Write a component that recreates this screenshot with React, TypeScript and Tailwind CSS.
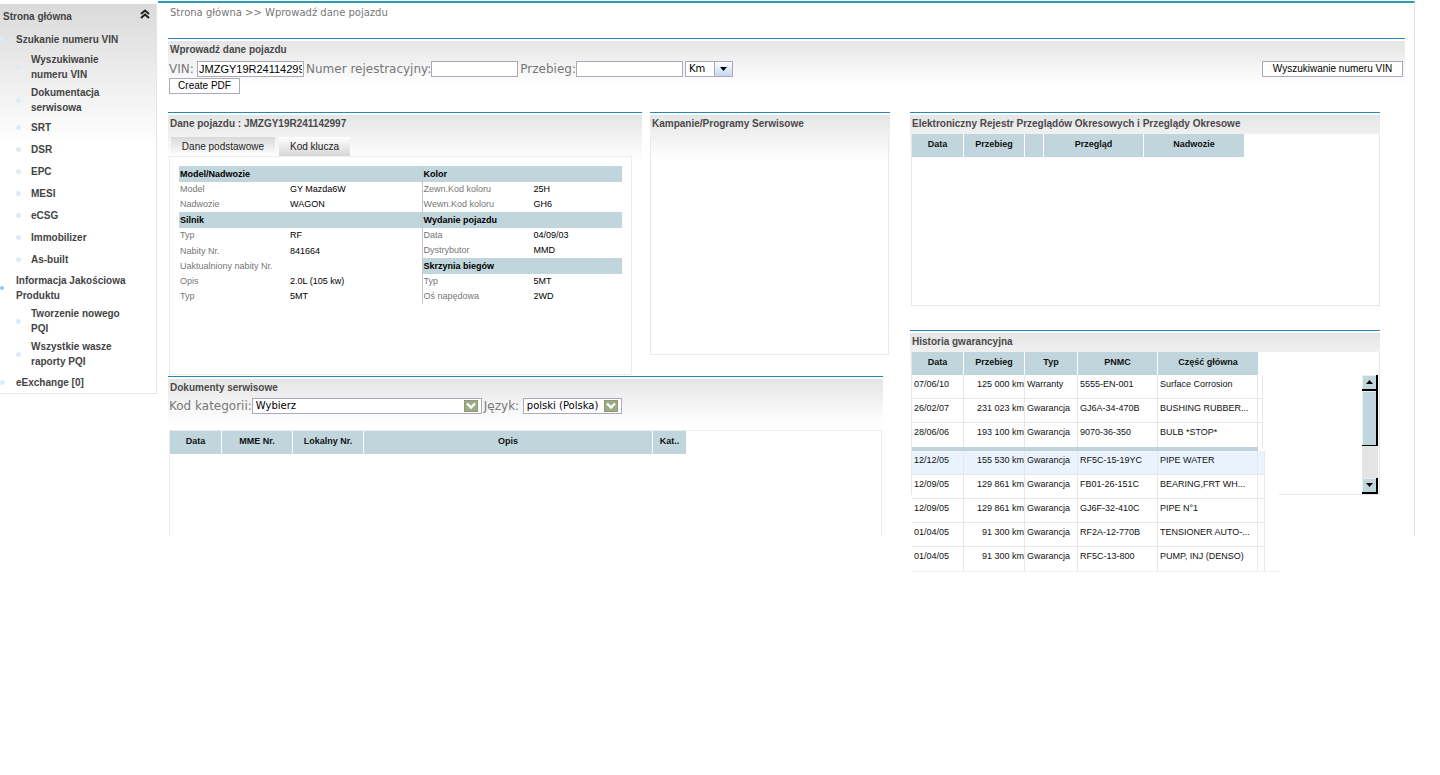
import React, { useState } from 'react';
import clsx from 'clsx';

interface MenuItem {
  label: string;
  children?: string[];
}

interface Column {
  label: string;
  width: string;
}

interface SpecRow {
  label: string;
  value?: string;
  header?: boolean;
}

interface Claim {
  date: string;
  mileage: string;
  type: string;
  pnmc: string;
  part: string;
}

const menu: MenuItem[] = [
  {
    label: 'Szukanie numeru VIN',
    children: [
      'Wyszukiwanie numeru VIN',
      'Dokumentacja serwisowa',
      'SRT',
      'DSR',
      'EPC',
      'MESI',
      'eCSG',
      'Immobilizer',
      'As-built',
    ],
  },
  {
    label: 'Informacja Jakościowa Produktu',
    children: ['Tworzenie nowego PQI', 'Wszystkie wasze raporty PQI'],
  },
  { label: 'eExchange [0]' },
];

const tabLabels = ['Dane podstawowe', 'Kod klucza'];

const specLeft: SpecRow[] = [
  { label: 'Model/Nadwozie', header: true },
  { label: 'Model', value: 'GY Mazda6W' },
  { label: 'Nadwozie', value: 'WAGON' },
  { label: 'Silnik', header: true },
  { label: 'Typ', value: 'RF' },
  { label: 'Nabity Nr.', value: '841664' },
  { label: 'Uaktualniony nabity Nr.', value: '' },
  { label: 'Opis', value: '2.0L (105 kw)' },
  { label: 'Typ', value: '5MT' },
];

const specRight: SpecRow[] = [
  { label: 'Kolor', header: true },
  { label: 'Zewn.Kod koloru', value: '25H' },
  { label: 'Wewn.Kod koloru', value: 'GH6' },
  { label: 'Wydanie pojazdu', header: true },
  { label: 'Data', value: '04/09/03' },
  { label: 'Dystrybutor', value: 'MMD' },
  { label: 'Skrzynia biegów', header: true },
  { label: 'Typ', value: '5MT' },
  { label: 'Oś napędowa', value: '2WD' },
];

const serviceColumns: Column[] = [
  { label: 'Data', width: 'w-[52px]' },
  { label: 'Przebieg', width: 'w-[61px]' },
  { label: '', width: 'w-[19px]' },
  { label: 'Przegląd', width: 'w-[100px]' },
  { label: 'Nadwozie', width: 'w-[100px]' },
];

const documentColumns: Column[] = [
  { label: 'Data', width: 'w-[52px]' },
  { label: 'MME Nr.', width: 'w-[71px]' },
  { label: 'Lokalny Nr.', width: 'w-[71px]' },
  { label: 'Opis', width: 'w-[289px]' },
  { label: 'Kat..', width: 'w-[33px]' },
];

const claimColumns: Column[] = [
  { label: 'Data', width: 'w-[52px]' },
  { label: 'Przebieg', width: 'w-[61px]' },
  { label: 'Typ', width: 'w-[53px]' },
  { label: 'PNMC', width: 'w-[80px]' },
  { label: 'Część główna', width: 'w-[100px]' },
];

const recentClaims: Claim[] = [
  { date: '07/06/10', mileage: '125 000 km', type: 'Warranty', pnmc: '5555-EN-001', part: 'Surface Corrosion' },
  { date: '26/02/07', mileage: '231 023 km', type: 'Gwarancja', pnmc: 'GJ6A-34-470B', part: 'BUSHING RUBBER...' },
  { date: '28/06/06', mileage: '193 100 km', type: 'Gwarancja', pnmc: '9070-36-350', part: 'BULB *STOP*' },
];

const olderClaims: Claim[] = [
  { date: '12/12/05', mileage: '155 530 km', type: 'Gwarancja', pnmc: 'RF5C-15-19YC', part: 'PIPE WATER' },
  { date: '12/09/05', mileage: '129 861 km', type: 'Gwarancja', pnmc: 'FB01-26-151C', part: 'BEARING,FRT WH...' },
  { date: '12/09/05', mileage: '129 861 km', type: 'Gwarancja', pnmc: 'GJ6F-32-410C', part: 'PIPE N°1' },
  { date: '01/04/05', mileage: '91 300 km', type: 'Gwarancja', pnmc: 'RF2A-12-770B', part: 'TENSIONER AUTO-...' },
  { date: '01/04/05', mileage: '91 300 km', type: 'Gwarancja', pnmc: 'RF5C-13-800', part: 'PUMP, INJ (DENSO)' },
];

const verdana = "font-['DejaVu_Sans',sans-serif]";
const inputClass = 'mr-0.5 h-4 border border-[#a9abbd] bg-white px-px text-[11px] text-black outline-none';
const buttonClass = 'h-4 border border-[#a9abbd] bg-white text-[10px] leading-[14px] text-black';
const selectClass = 'block h-4 appearance-none border border-[#a9abbd] bg-white pl-[3px] text-[10px] leading-[14px] text-black';

const Panel: React.FC<{ title: string; className?: string; children?: React.ReactNode }> = ({
  title,
  className,
  children,
}) => (
  <section className={clsx('border-t border-[#2b86b5] pt-0.5', className)}>
    <div className="bg-[linear-gradient(to_bottom,#e5e5e5,#ffffff_44px)]">
      <h2 className="h-[19px] pl-0.5 text-[10px] font-bold leading-[18px] text-[#4a4a4a]">{title}</h2>
      {children}
    </div>
  </section>
);

const HeadRow: React.FC<{ columns: Column[] }> = ({ columns }) => (
  <thead>
    <tr>
      {columns.map((col, idx) => (
        <th
          key={idx}
          className={clsx(
            'h-[23px] border-white bg-[#c0d6dc] p-0 align-top text-[9px] font-bold leading-[20px] text-[#111]',
            idx < columns.length - 1 && 'border-r',
            col.width,
          )}
        >
          {col.label}
        </th>
      ))}
    </tr>
  </thead>
);

const SpecTable: React.FC<{ rows: SpecRow[] }> = ({ rows }) => (
  <table className="w-full table-fixed border-separate border-spacing-0 text-left text-[9px] leading-[15px]">
    <colgroup>
      <col className="w-[111px]" />
      <col />
    </colgroup>
    <tbody>
      {rows.map((row, idx) =>
        row.header ? (
          <tr key={idx}>
            <th colSpan={2} className="h-4 bg-[#c0d6dc] p-0 pl-px font-bold text-black">{row.label}</th>
          </tr>
        ) : (
          <tr key={idx}>
            <td className="whitespace-nowrap p-0 pl-px text-[#777]">{row.label}</td>
            <td className="h-[15px] p-0 text-black">{row.value}</td>
          </tr>
        ),
      )}
    </tbody>
  </table>
);

const ClaimRow: React.FC<{ claim: Claim; selected?: boolean }> = ({ claim, selected }) => {
  const cell = 'h-6 overflow-hidden whitespace-nowrap border-b border-r border-[#e8e8e8] p-0 pl-0.5 align-top';
  return (
    <tr className={clsx('last:*:border-b-0', selected && 'bg-[#e9f3fd]')}>
      <td className={cell}>{claim.date}</td>
      <td className={clsx(cell, 'text-right')}>{claim.mileage}</td>
      <td className={cell}>{claim.type}</td>
      <td className={cell}>{claim.pnmc}</td>
      <td className={cell}>{claim.part}</td>
      <td className={cell}></td>
    </tr>
  );
};

const Bullet: React.FC<{ strong?: boolean }> = ({ strong }) => (
  <span className={clsx('shrink-0 rounded-sm', strong ? 'size-1 bg-[#8fcbee]' : 'size-[5px] bg-[#dcebf8]')} />
);

// Zielona strzałka pola wyboru
const GreenArrow = () => (
  <svg className="pointer-events-none absolute right-1 top-0.5" width="14" height="12" viewBox="0 0 14 12">
    <rect width="14" height="12" fill="#8b9c74" />
    <rect x="1" y="1" width="12" height="10" fill="#9dab87" />
    <path d="M3 3.5 L7 7.5 L11 3.5" fill="none" stroke="#fff" strokeWidth="2.4" />
  </svg>
);

const App: React.FC = () => {
  const [activeTab, setActiveTab] = useState(0);
  const [vin, setVin] = useState('JMZGY19R241142997');

  return (
    <div className="flex min-h-screen items-start bg-white pr-[25px] font-['Liberation_Sans',Arial,sans-serif]">
      {/* Menu boczne */}
      <nav className="mt-1 w-[157px] shrink-0 border-b border-r border-[#e6e6e6] bg-[linear-gradient(to_bottom,#dadada,#ffffff_140px)] text-[10px] font-bold leading-[15px] text-[#444]">
        <div className="flex h-6 items-center justify-between pl-[3px] pr-1.5">
          <a href="#">Strona główna</a>
          <button aria-label="Zwiń menu" className="-mt-1">
            <svg width="10" height="10" viewBox="0 0 10 10" fill="none" stroke="#222" strokeWidth="2">
              <path d="M1 5 L5 1.5 L9 5 M1 9 L5 5.5 L9 9" />
            </svg>
          </button>
        </div>
        <ul>
          {menu.map((item, idx) => (
            <li key={item.label}>
              <div className="flex min-h-[22px] items-center gap-2.5 pb-px pt-0.5">
                <span className="flex w-1.5 shrink-0"><Bullet strong={idx === 1} /></span>
                <a href="#">{item.label}</a>
              </div>
              {item.children && (
                <ul className="pb-px">
                  {item.children.map(child => (
                    <li key={child} className="flex min-h-[22px] items-center gap-2.5 pb-px pl-4 pt-0.5">
                      <Bullet />
                      <a href="#" className="w-[100px]">{child}</a>
                    </li>
                  ))}
                </ul>
              )}
            </li>
          ))}
        </ul>
      </nav>

      <main className="ml-px mt-px min-w-0 flex-1 border-r border-t-2 border-r-[#e0e0e0] border-t-[#2b9db3] pl-2.5 pr-[9px]">
        <div className={clsx('h-[35px] pl-0.5 pt-[3px] text-[10px] leading-[14px] text-[#777]', verdana)}>
          Strona główna &gt;&gt; Wprowadź dane pojazdu
        </div>

        {/* Wyszukiwanie pojazdu */}
        <Panel title="Wprowadź dane pojazdu">
          <div className="pl-px pr-0.5 pt-px">
            <div className={clsx('flex items-center text-[12px] leading-4 text-[#777]', verdana)}>
              <label htmlFor="vin" className="w-7">VIN:</label>
              <input
                id="vin"
                value={vin}
                onChange={e => setVin(e.target.value)}
                className={clsx(inputClass, "w-[107px] font-['Liberation_Sans',Arial,sans-serif]")}
              />
              <label htmlFor="plate">Numer rejestracyjny:</label>
              <input id="plate" className={clsx(inputClass, 'w-[87px]')} />
              <label htmlFor="mileage">Przebieg:</label>
              <input id="mileage" className={clsx(inputClass, 'w-[107px]')} />
              <div className="relative">
                <select aria-label="Jednostka" className={clsx(selectClass, 'w-12')}>
                  <option>Km</option>
                </select>
                <span className="pointer-events-none absolute right-0 top-0 flex h-4 w-[19px] items-center justify-center border border-[#a9abbd] bg-linear-to-b from-white to-[#c3d6f0]">
                  <svg width="7" height="4" viewBox="0 0 7 4"><path d="M0 0 H7 L3.5 4 Z" fill="#000" /></svg>
                </span>
              </div>
              <button className={clsx(buttonClass, "ml-auto w-[141px] font-['Liberation_Sans',Arial,sans-serif]")}>
                Wyszukiwanie numeru VIN
              </button>
            </div>
            <button className={clsx(buttonClass, 'mt-px block w-[71px]')}>Create PDF</button>
          </div>
        </Panel>

        <div className="mr-[25px] mt-[18px] grid grid-cols-[722fr_470fr] gap-5">
          <div>
            <div className="grid grid-cols-[474fr_240fr] items-start gap-2">
              {/* Dane pojazdu */}
              <Panel title="Dane pojazdu : JMZGY19R241142997">
                <div className="flex items-end gap-1 pl-[3px] pt-[3px]">
                  {tabLabels.map((label, idx) => (
                    <button
                      key={label}
                      onClick={() => setActiveTab(idx)}
                      className={clsx(
                        'h-[19px] text-[10px] leading-[18px] text-[#222]',
                        idx === 0 ? 'w-[104px]' : 'w-[71px]',
                        activeTab === idx
                          ? 'bg-linear-to-b from-[#d9d9d9] to-white'
                          : 'bg-linear-to-b from-white to-[#d6d6d6]',
                      )}
                    >
                      {label}
                    </button>
                  ))}
                </div>
                <div className="ml-px mr-2.5 h-[219px] border border-[#ececec] bg-white px-[9px] pt-[9px]">
                  {activeTab === 0 && (
                    <div className="grid grid-cols-[242fr_200fr]">
                      <SpecTable rows={specLeft} />
                      <div className="border-l border-[#c8c8c8]">
                        <SpecTable rows={specRight} />
                      </div>
                    </div>
                  )}
                </div>
              </Panel>

              <Panel title="Kampanie/Programy Serwisowe">
                <div className="mr-px h-[221px] border-x border-b border-[#e9e9e9]" />
              </Panel>
            </div>

            {/* Dokumenty */}
            <Panel title="Dokumenty serwisowe" className="mr-[7px] mt-px">
              <div className={clsx('flex items-center pl-px text-[12px] leading-4 text-[#777]', verdana)}>
                <label htmlFor="category">Kod kategorii:</label>
                <div className="relative mr-0.5">
                  <select id="category" className={clsx(selectClass, 'w-[230px]')}>
                    <option>Wybierz</option>
                  </select>
                  <GreenArrow />
                </div>
                <label htmlFor="language" className="w-[39px]">Język:</label>
                <div className="relative">
                  <select id="language" className={clsx(selectClass, 'w-[99px]')}>
                    <option>polski (Polska)</option>
                  </select>
                  <GreenArrow />
                </div>
              </div>
              <div className="ml-px mr-px mt-4 h-[106px] border-x border-t border-[#ececec] bg-white">
                <table className="w-[516px] table-fixed border-separate border-spacing-0">
                  <HeadRow columns={documentColumns} />
                </table>
              </div>
            </Panel>
          </div>

          <div>
            <Panel title="Elektroniczny Rejestr Przeglądów Okresowych i Przeglądy Okresowe">
              <div className="ml-px h-[172px] border-x border-b border-[#e6e6e6] bg-white">
                <table className="w-[332px] table-fixed border-separate border-spacing-0">
                  <HeadRow columns={serviceColumns} />
                </table>
              </div>
            </Panel>

            {/* Historia gwarancyjna */}
            <Panel title="Historia gwarancyjna" className="mt-6">
              <div className="ml-px flex h-[143px] items-start justify-between border-x border-b border-[#e6e6e6] bg-white">
                <div className="relative text-[9px] leading-[18px] text-[#111]">
                  <table className="w-[346px] table-fixed border-separate border-spacing-0">
                    <HeadRow columns={claimColumns} />
                  </table>
                  <table className="w-[351px] table-fixed border-separate border-spacing-0">
                    <colgroup>
                      {claimColumns.map(col => <col key={col.label} className={col.width} />)}
                      <col />
                    </colgroup>
                    <tbody>
                      {recentClaims.map(claim => <ClaimRow key={claim.pnmc} claim={claim} />)}
                    </tbody>
                  </table>
                  <div className="w-[367px] border-b border-[#efefef] bg-white">
                    <div className="h-1 w-[346px] bg-[#c3d2da]" />
                    <table className="w-[353px] table-fixed border-separate border-spacing-0">
                      <colgroup>
                        {claimColumns.map(col => <col key={col.label} className={col.width} />)}
                        <col />
                      </colgroup>
                      <tbody>
                        {olderClaims.map((claim, idx) => (
                          <ClaimRow key={claim.pnmc} claim={claim} selected={idx === 0} />
                        ))}
                      </tbody>
                    </table>
                  </div>
                </div>
                {/* Pasek przewijania */}
                <div className="mr-px mt-[23px] flex h-[119px] w-4 flex-col bg-[#e4e4e4]">
                  <button aria-label="W górę" className="flex h-4 items-center justify-center border-b-2 border-r-2 border-black bg-[#c0d6dc] shadow-[inset_1px_1px_0_#e8f2f4]">
                    <svg width="7" height="4" viewBox="0 0 7 4"><path d="M0 4 H7 L3.5 0 Z" fill="#000" /></svg>
                  </button>
                  <div className="h-[55px] border-b border-r-2 border-black bg-[#c0d6dc] shadow-[inset_1px_1px_0_#e8f2f4]" />
                  <button aria-label="W dół" className="mt-auto flex h-4 items-center justify-center border-b-2 border-r-2 border-black bg-[#c0d6dc] shadow-[inset_1px_1px_0_#e8f2f4]">
                    <svg width="7" height="4" viewBox="0 0 7 4"><path d="M0 0 H7 L3.5 4 Z" fill="#000" /></svg>
                  </button>
                </div>
              </div>
            </Panel>
          </div>
        </div>
      </main>
    </div>
  );
};

export default App;
